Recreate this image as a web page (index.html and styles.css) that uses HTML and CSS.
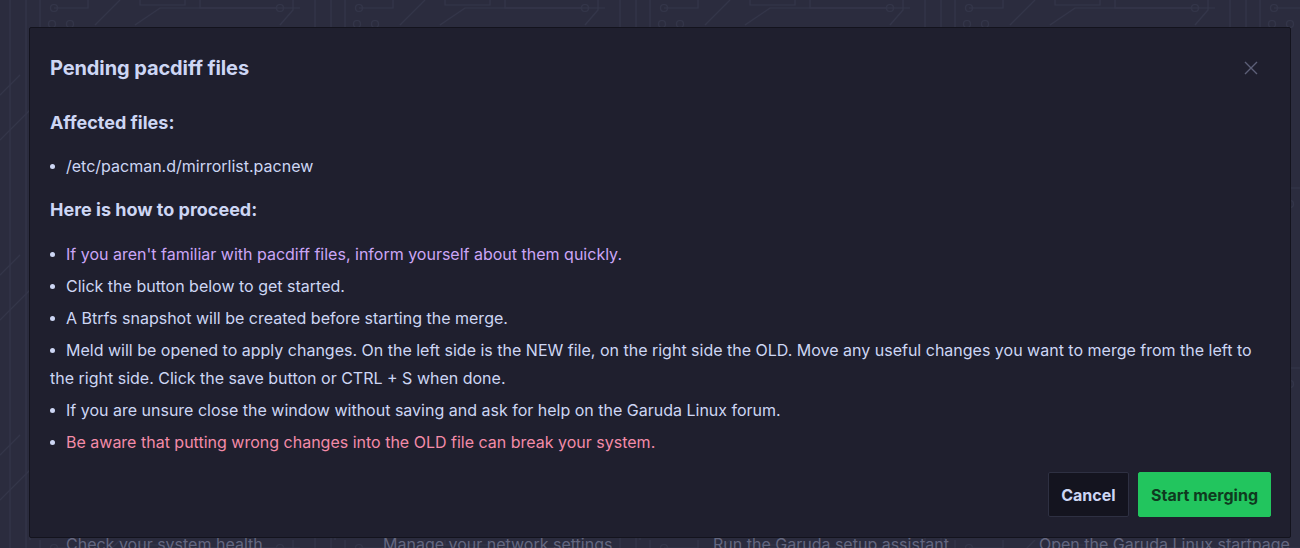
FILE: index.html
```html
<!DOCTYPE html>
<html lang="en">
<head>
<meta charset="utf-8">
<title>Pending pacdiff files</title>
<link rel="stylesheet" href="styles.css">
</head>
<body>
<div class="page">
  <svg class="backdrop" width="1300" height="548" aria-hidden="true">
    <defs>
      <pattern id="circuit" width="305" height="180" patternUnits="userSpaceOnUse">
        <g fill="none" stroke="#333549" stroke-width="1.2">
          <path d="M10 0 V180 M26 0 V180 M40 0 V60"/>
          <path d="M54 8 H88 V0"/>
          <circle cx="54" cy="8" r="3.5"/>
          <circle cx="52" cy="24" r="3.5"/>
          <circle cx="70" cy="24" r="3.5"/>
          <path d="M120 0 L95 25 M140 0 V5 H185 V0"/>
          <path d="M135 25 L160 8 H300"/>
          <path d="M200 0 V8 H277"/>
          <circle cx="280" cy="8" r="3.5"/>
          <path d="M293 0 V10 L280 25"/>
          <path d="M0 95 L20 75 M0 140 L30 110 V180"/>
        </g>
      </pattern>
    </defs>
    <rect width="1300" height="548" fill="url(#circuit)"/>
  </svg>

  <div class="underlay">
    <span>Check your system health</span>
    <span>Manage your network settings</span>
    <span>Run the Garuda setup assistant</span>
    <span>Open the Garuda Linux startpage</span>
  </div>

  <div class="dialog">
    <div class="dialog-header">
      <h1 class="title">Pending pacdiff files</h1>
      <button class="close" aria-label="Close">
        <svg width="14" height="14" viewBox="0 0 14 14"><path d="M1 1 L13 13 M13 1 L1 13" stroke="#5d6078" stroke-width="1.4" fill="none"/></svg>
      </button>
    </div>
    <div class="dialog-body">
      <h2 class="section">Affected files:</h2>
      <ul class="list files">
        <li>/etc/pacman.d/mirrorlist.pacnew</li>
      </ul>
      <h2 class="section">Here is how to proceed:</h2>
      <ul class="list steps">
        <li class="link">If you aren't familiar with pacdiff files, inform yourself about them quickly.</li>
        <li>Click the button below to get started.</li>
        <li>A Btrfs snapshot will be created before starting the merge.</li>
        <li>Meld will be opened to apply changes. On the left side is the NEW file, on the right side the OLD. Move any useful changes you want to merge from the left to the right side. Click the save button or CTRL + S when done.</li>
        <li>If you are unsure close the window without saving and ask for help on the Garuda Linux forum.</li>
        <li class="warn">Be aware that putting wrong changes into the OLD file can break your system.</li>
      </ul>
    </div>
    <div class="dialog-footer">
      <button class="btn btn-cancel">Cancel</button>
      <button class="btn btn-primary">Start merging</button>
    </div>
  </div>
</div>
</body>
</html>
```

FILE: styles.css
```css
* { box-sizing: border-box; }
html, body { margin: 0; padding: 0; }
body {
  background: #2b2c3e;
  font-family: Inter, "Noto Sans", sans-serif;
  color: #cdd6f4;
  width: 1300px;
  height: 548px;
  overflow: hidden;
}
.page {
  position: relative;
  width: 1300px;
  height: 548px;
  padding: 27px 9px 0 29px;
}
.backdrop {
  position: absolute;
  left: 0;
  top: 0;
}
.underlay {
  position: absolute;
  left: 66px;
  top: 534px;
  display: flex;
  color: #646780;
  font-size: 16px;
  line-height: 20px;
}
.underlay span:nth-child(1) { width: 317px; }
.underlay span:nth-child(2) { width: 330px; }
.underlay span:nth-child(3) { width: 326px; }

.dialog {
  position: relative;
  width: 1262px;
  height: 511px;
  background: #1f1f2e;
  border: 1px solid #13131d;
  border-radius: 2px;
  padding: 0 20px;
  display: flex;
  flex-direction: column;
}
.dialog-header {
  display: flex;
  align-items: center;
  justify-content: space-between;
  height: 80px;
  padding-bottom: 1px;
}
.title {
  margin: 0;
  font-size: 20px;
  font-weight: 700;
  color: #cdd6f4;
  letter-spacing: -0.1px;
}
.close {
  background: none;
  border: 0;
  padding: 0;
  margin-right: 12px;
  display: flex;
  cursor: pointer;
}
.dialog-body {
  flex: 1;
  padding-top: 3px;
}
.section {
  margin: 0;
  font-size: 18px;
  font-weight: 700;
  line-height: 24px;
  color: #cdd6f4;
}
.list {
  list-style: none;
  margin: 0;
  padding: 0;
  font-size: 16px;
  line-height: 28px;
}
.list li { margin-bottom: 4px; }
.list li::before {
  content: "";
  display: inline-block;
  width: 5px;
  height: 5px;
  border-radius: 50%;
  background: #cdd6f4;
  margin-right: 11px;
  vertical-align: 3px;
}
.files { margin-top: 17px; margin-bottom: 18px; }
.steps { margin-top: 18px; }
.link { color: #cba6f7; }
.warn { color: #f38ba8; }

.dialog-footer {
  display: flex;
  justify-content: flex-end;
  gap: 9px;
  margin-right: -1px;
  padding-bottom: 20px;
}
.btn {
  font-family: Inter, "Noto Sans", sans-serif;
  font-size: 16px;
  font-weight: 700;
  height: 45px;
  border-radius: 2px;
  padding: 0 12px;
  cursor: pointer;
}
.btn-cancel {
  background: #14141f;
  color: #cdd6f4;
  border: 1px solid #2e3042;
  padding: 0 12.5px;
}
.btn-primary {
  background: #22c55e;
  color: #0f3a1f;
  border: 1px solid #22c55e;
}
```
